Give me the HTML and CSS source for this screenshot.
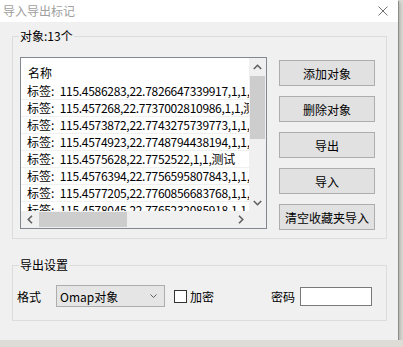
FILE: index.html
```html
<!DOCTYPE html>
<html lang="zh-CN">
<head>
    <meta charset="UTF-8">
    <title>导入导出标记</title>
    <link rel="stylesheet" href="styles.css">
</head>
<body>
    <div class="window">
        <div class="titlebar">
            <span class="title">导入导出标记</span>
            <svg class="close" width="10" height="10" viewBox="0 0 10 10">
                <path d="M0.5 0.5 L9.5 9.5 M9.5 0.5 L0.5 9.5" stroke="#707070" stroke-width="1" fill="none"/>
            </svg>
        </div>
        <div class="client">
            <div class="group objects">
                <span class="group-title">对象:13个</span>
                <div class="listbox">
                    <div class="list-view">
                        <div class="list-head">名称</div>
                        <div class="list-row"><span class="tag">标签:</span> 115.4586283,22.7826647339917,1,1,测试</div>
                        <div class="list-row"><span class="tag">标签:</span> 115.457268,22.7737002810986,1,1,测试</div>
                        <div class="list-row"><span class="tag">标签:</span> 115.4573872,22.7743275739773,1,1,测试</div>
                        <div class="list-row"><span class="tag">标签:</span> 115.4574923,22.7748794438194,1,1,测试</div>
                        <div class="list-row"><span class="tag">标签:</span> 115.4575628,22.7752522,1,1,测试</div>
                        <div class="list-row"><span class="tag">标签:</span> 115.4576394,22.7756595807843,1,1,测试</div>
                        <div class="list-row"><span class="tag">标签:</span> 115.4577205,22.7760856683768,1,1,测试</div>
                        <div class="list-row"><span class="tag">标签:</span> 115.4578045,22.7765232085918,1,1,测试</div>
                    </div>
                    <div class="vscroll">
                        <div class="arrow">
                            <svg width="9" height="6" viewBox="0 0 9 6"><polyline points="0.8,5 4.5,1.3 8.2,5" stroke="#606060" stroke-width="1.6" fill="none"/></svg>
                        </div>
                        <div class="vtrack"><div class="vthumb"></div></div>
                        <div class="arrow">
                            <svg width="9" height="6" viewBox="0 0 9 6"><polyline points="0.8,1 4.5,4.7 8.2,1" stroke="#606060" stroke-width="1.6" fill="none"/></svg>
                        </div>
                    </div>
                    <div class="hscroll">
                        <div class="arrow">
                            <svg width="6" height="9" viewBox="0 0 6 9"><polyline points="5,0.8 1.3,4.5 5,8.2" stroke="#606060" stroke-width="1.6" fill="none"/></svg>
                        </div>
                        <div class="htrack"><div class="hthumb"></div></div>
                        <div class="arrow">
                            <svg width="6" height="9" viewBox="0 0 6 9"><polyline points="1,0.8 4.7,4.5 1,8.2" stroke="#606060" stroke-width="1.6" fill="none"/></svg>
                        </div>
                    </div>
                    <div class="corner"></div>
                </div>
                <div class="buttons">
                    <button>添加对象</button>
                    <button>删除对象</button>
                    <button>导出</button>
                    <button>导入</button>
                    <button>清空收藏夹导入</button>
                </div>
            </div>
            <div class="group export">
                <span class="group-title">导出设置</span>
                <div class="export-row">
                    <span class="field-label">格式</span>
                    <div class="combo">
                        <span>Omap对象</span>
                        <svg width="7" height="4" viewBox="0 0 7 4"><polyline points="0.5,0.5 3.5,3.5 6.5,0.5" stroke="#606060" stroke-width="1" fill="none"/></svg>
                    </div>
                    <span class="checkbox"></span>
                    <span class="check-label">加密</span>
                    <span class="pwd-label">密码</span>
                    <div class="textbox"></div>
                </div>
            </div>
        </div>
    </div>
</body>
</html>
```

FILE: styles.css
```css
body {
    margin: 0;
    background: #dedcd6;
    font-family: "Noto Sans CJK SC", "Microsoft YaHei", sans-serif;
    font-size: 12px;
    color: #000;
}
.window {
    width: 398px;
    height: 340px;
    background: #f0f0f0;
    display: flex;
    flex-direction: column;
    box-shadow: 1px 1px 0 #8c8c8c, 2px 2px 4px rgba(0, 0, 0, 0.25);
}
.titlebar {
    height: 22px;
    background: #fff;
    display: flex;
    align-items: center;
    padding-left: 3px;
}
.title {
    color: #a0a0a0;
    line-height: 14px;
}
.close {
    margin-left: auto;
    margin-right: 10px;
}
.client {
    display: flex;
    flex-direction: column;
    padding: 14px 11px 0 12px;
}
.group {
    position: relative;
    border: 1px solid #dcdcdc;
    box-sizing: border-box;
}
.group-title {
    position: absolute;
    top: -8px;
    left: 6px;
    padding: 0 1px;
    background: #f0f0f0;
    line-height: 14px;
}
.objects {
    height: 203px;
    display: flex;
    gap: 12px;
    padding: 20px 0 0 7px;
}
.listbox {
    width: 247px;
    height: 172px;
    box-sizing: border-box;
    border: 1px solid #828790;
    background: #fff;
    display: grid;
    grid-template-columns: 1fr 17px;
    grid-template-rows: 1fr 17px;
}
.list-view {
    overflow: hidden;
    white-space: nowrap;
}
.list-head {
    height: 25px;
    padding: 6px 0 0 7px;
    box-sizing: border-box;
    line-height: 17px;
}
.list-row {
    height: 17px;
    box-sizing: border-box;
    border-bottom: 1px solid #f0f0f0;
    padding-left: 6px;
    line-height: 16px;
    letter-spacing: -0.3px;
}
.tag {
    letter-spacing: 0;
    margin-right: 3px;
}
.vscroll {
    background: #f0f0f0;
    display: flex;
    flex-direction: column;
}
.hscroll {
    background: #f0f0f0;
    display: flex;
}
.arrow {
    width: 17px;
    height: 17px;
    display: flex;
    align-items: center;
    justify-content: center;
    flex-shrink: 0;
}
.vtrack {
    flex: 1;
    padding: 1px 1px 0 1px;
}
.vthumb {
    height: 63px;
    background: #cdcdcd;
}
.htrack {
    flex: 1;
    padding: 1px 0 1px 1px;
}
.hthumb {
    width: 88px;
    height: 15px;
    background: #cdcdcd;
}
.corner {
    background: #f0f0f0;
}
.buttons {
    display: flex;
    flex-direction: column;
    gap: 10px;
    padding-top: 3px;
}
button {
    width: 96px;
    height: 26px;
    background: #e1e1e1;
    border: 1px solid #adadad;
    font-family: inherit;
    font-size: 12px;
    color: #000;
    padding: 0;
}
.export {
    margin-top: 26px;
    height: 56px;
    padding: 19px 0 0 4px;
}
.export-row {
    display: flex;
    align-items: center;
    height: 22px;
}
.field-label {
    width: 39px;
}
.combo {
    width: 109px;
    height: 22px;
    box-sizing: border-box;
    border: 1px solid #adadad;
    background: #e5e5e5;
    display: flex;
    align-items: center;
    justify-content: space-between;
    padding: 0 7px 0 3px;
}
.checkbox {
    width: 13px;
    height: 13px;
    box-sizing: border-box;
    border: 1px solid #333;
    background: #fff;
    margin-left: 9px;
}
.check-label {
    margin-left: 3px;
}
.pwd-label {
    margin-left: 57px;
}
.textbox {
    width: 72px;
    height: 19px;
    box-sizing: border-box;
    border: 1px solid #7a7a7a;
    background: #fff;
    margin-left: 5px;
}
```
